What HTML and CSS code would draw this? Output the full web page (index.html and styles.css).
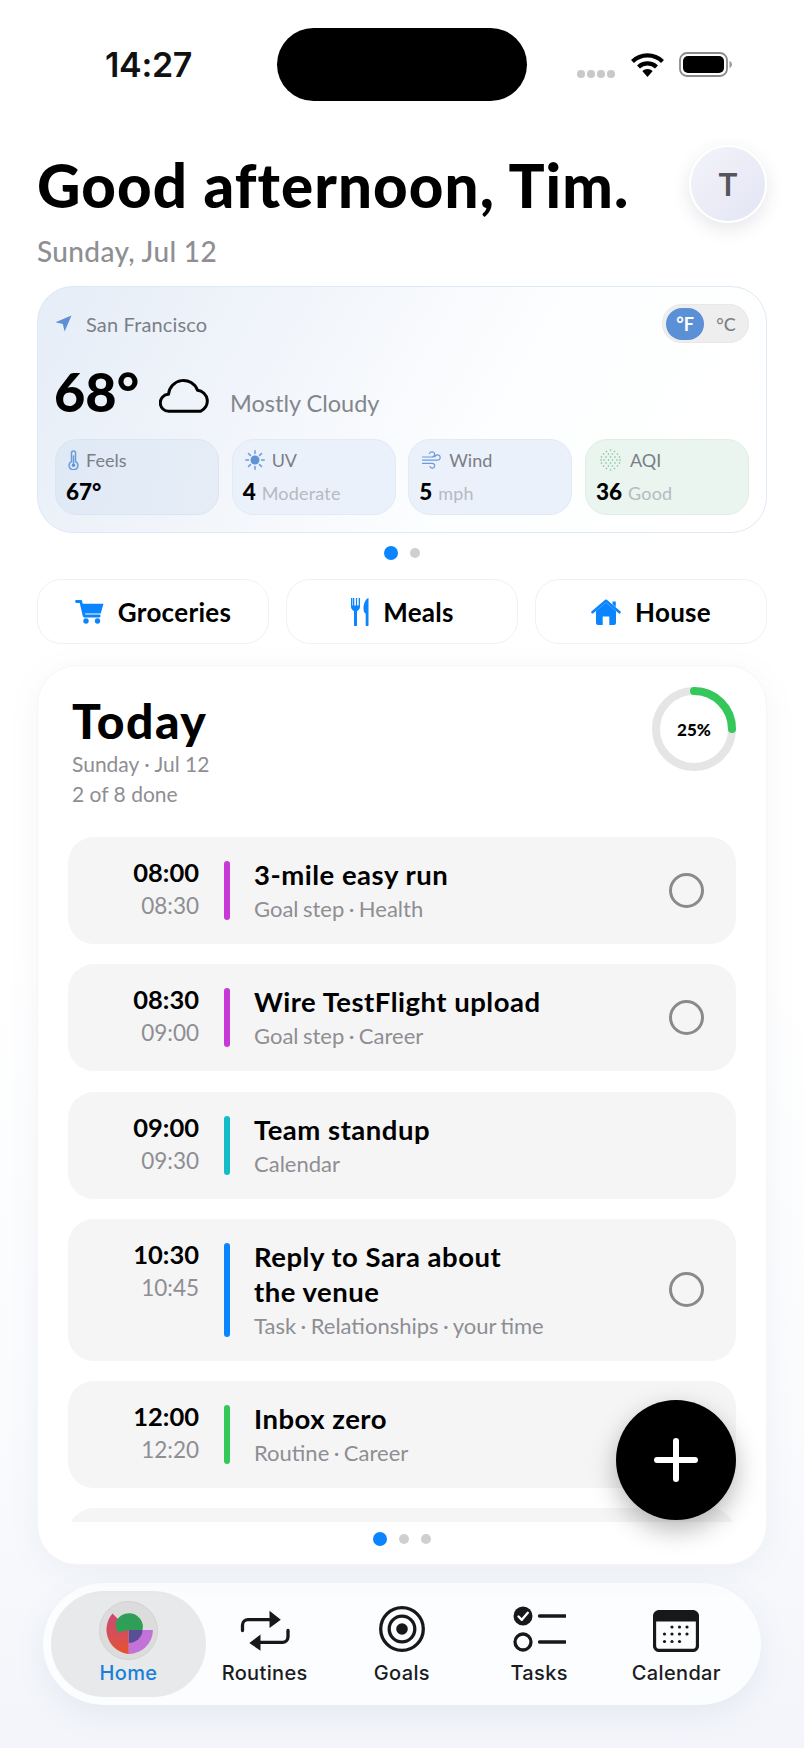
FILE: index.html
```html
<!DOCTYPE html>
<html lang="en">
<head>
<meta charset="utf-8">
<title>Home</title>
<link rel="stylesheet" href="styles.css">
</head>
<body>
<div class="phone">
  <header class="status">
    <div class="status-left"><span class="clock">14:27</span></div>
    <div class="island"></div>
    <div class="status-right">
      <span class="signal"><i></i><i></i><i></i><i></i></span>
      <svg class="wifi" width="33" height="24" viewBox="0 0 33 24"><path d="M1.500 8.500a21.500 21.500 0 0 1 30 0" class="wifi-arc"/><path d="M7.500 14a13 13 0 0 1 18 0" class="wifi-arc"/><path d="M16.500 24l-5.200-6a7.600 7.600 0 0 1 10.400 0z" class="wifi-fill"/></svg>
      <svg class="battery" width="54" height="25" viewBox="0 0 54 25"><rect x="1" y="1" width="47" height="23" rx="7" class="batt-shell"/><rect x="4" y="4" width="41" height="17" rx="5" class="batt-fill"/><path d="M50.500 9v7c1.600-.6 2.500-2 2.500-3.500s-.9-2.900-2.500-3.500z" class="batt-cap"/></svg>
    </div>
  </header>

  <section class="greeting">
    <div>
      <h1 class="hello">Good afternoon, Tim.</h1>
      <p class="date">Sunday, Jul 12</p>
    </div>
    <div class="avatar">T</div>
  </section>

  <section class="weather">
    <div class="weather-top">
      <div class="place">
        <svg width="17" height="17" viewBox="0 0 17 17"><path d="M16.500.5L.5 7.200l7.300 1.800 1.800 7.500z" class="loc"/></svg>
        <span>San Francisco</span>
      </div>
      <div class="unit"><span class="unit-on">°F</span><span class="unit-off">°C</span></div>
    </div>
    <div class="now">
      <span class="temp">68°</span>
      <svg class="cloud" width="53" height="35" viewBox="0 0 53 35"><path d="M10 33.300a8.500 8.500 0 0 1-.5-17A15 15 0 0 1 38.500 12.200 11 11 0 0 1 41.500 33.300z" class="cloud-line"/></svg>
      <span class="cond">Mostly Cloudy</span>
    </div>
    <div class="tiles">
      <div class="tile tile-deep">
        <div class="tile-label tl-feels">
          <svg width="11" height="20" viewBox="0 0 11 20"><path d="M3.500 11.500V3a2 2 0 0 1 4 0v8.500a4.400 4.400 0 1 1-4 0z" class="ic-line"/><circle cx="5.500" cy="15.300" r="1.800" class="ic-fill"/><path d="M5.500 6v8" class="ic-line"/></svg>
          <span>Feels</span>
        </div>
        <div class="tile-val"><b>67°</b></div>
      </div>
      <div class="tile">
        <div class="tile-label tl-uv">
          <svg width="20" height="20" viewBox="0 0 20 20"><circle cx="10" cy="10" r="4.500" class="ic-fill"/><path d="M10 .8v2.700M10 16.500v2.700M.8 10h2.700M16.500 10h2.700M3.500 3.500l1.900 1.900M14.600 14.600l1.900 1.900M3.500 16.500l1.900-1.900M14.600 5.400l1.900-1.900" class="ic-line"/></svg>
          <span>UV</span>
        </div>
        <div class="tile-val"><b>4</b><span>Moderate</span></div>
      </div>
      <div class="tile">
        <div class="tile-label tl-wind">
          <svg width="19" height="18" viewBox="0 0 19 18"><path d="M.5 6h9.500a2.600 2.600 0 1 0-2.500-3.300M.5 9.200h15a2.700 2.700 0 1 0-2.600-3.500M.5 12.400h9.800a2.400 2.400 0 1 1-2.300 3.100" class="ic-thin"/></svg>
          <span>Wind</span>
        </div>
        <div class="tile-val"><b>5</b><span>mph</span></div>
      </div>
      <div class="tile tile-green">
        <div class="tile-label tl-aqi">
          <svg width="21" height="22" viewBox="0 0 21 22" class="aqi-dots"><circle cx="10.500" cy="1" r=".8"/><circle cx="6.500" cy="2.500" r=".8"/><circle cx="14.500" cy="2.500" r=".8"/><circle cx="3.500" cy="5" r=".8"/><circle cx="8.500" cy="5" r=".8"/><circle cx="12.500" cy="5" r=".8"/><circle cx="17.500" cy="5" r=".8"/><circle cx="1.500" cy="8" r=".8"/><circle cx="6" cy="8" r=".8"/><circle cx="10.500" cy="8" r=".8"/><circle cx="15" cy="8" r=".8"/><circle cx="19.500" cy="8" r=".8"/><circle cx="1" cy="11" r=".8"/><circle cx="4" cy="11" r=".8"/><circle cx="8.500" cy="11" r=".8"/><circle cx="12.500" cy="11" r=".8"/><circle cx="17" cy="11" r=".8"/><circle cx="20" cy="11" r=".8"/><circle cx="1.500" cy="14" r=".8"/><circle cx="6" cy="14" r=".8"/><circle cx="10.500" cy="14" r=".8"/><circle cx="15" cy="14" r=".8"/><circle cx="19.500" cy="14" r=".8"/><circle cx="3.500" cy="17" r=".8"/><circle cx="8.500" cy="17" r=".8"/><circle cx="12.500" cy="17" r=".8"/><circle cx="17.500" cy="17" r=".8"/><circle cx="6.500" cy="19.500" r=".8"/><circle cx="14.500" cy="19.500" r=".8"/><circle cx="10.500" cy="21" r=".8"/></svg>
          <span>AQI</span>
        </div>
        <div class="tile-val"><b>36</b><span>Good</span></div>
      </div>
    </div>
  </section>

  <div class="pager pager-weather"><i class="on"></i><i></i></div>

  <nav class="chips">
    <a class="chip">
      <svg width="29" height="24" viewBox="0 0 29 24"><path d="M1.500 1.500h4.300l3.400 14.500h15" class="cart-line"/><path d="M7 3.800h21.500l-2.800 9.700H8.800z" class="blue"/><circle cx="11" cy="21" r="2.700" class="blue"/><circle cx="22.500" cy="21" r="2.700" class="blue"/></svg>
      <span>Groceries</span>
    </a>
    <a class="chip">
      <svg width="19" height="28" viewBox="0 0 19 28"><path d="M1 0v8.500c0 2.300 1.200 3.700 3 4.400V27a1.500 1.500 0 0 0 3 0V12.900c1.800-.7 3-2.100 3-4.400V0H8.700v7.500H7.100V0H5.900v7.500H4.300V0H2.700v7.500H2.100V0z" class="blue"/><path d="M18.500 0c-3 1-5 5.500-5 10.500 0 2.500.8 4.500 2.200 5.300V27a1.400 1.400 0 0 0 2.800 0z" class="blue"/></svg>
      <span>Meals</span>
    </a>
    <a class="chip">
      <svg width="30" height="26" viewBox="0 0 30 26"><path d="M5 12L15 3.500 25 12v12a2 2 0 0 1-2 2h-4.700v-8.500h-6.600V26H7a2 2 0 0 1-2-2z" class="blue"/><path d="M1.500 13.200L15 1.800l13.500 11.400" class="house-roof"/><path d="M21.500 2.500h3.300v5.600l-3.300-2.800z" class="blue"/></svg>
      <span>House</span>
    </a>
  </nav>

  <section class="today">
    <div class="today-head">
      <div>
        <h2 class="today-title">Today</h2>
        <p class="today-sub">Sunday · Jul 12</p>
        <p class="today-sub">2 of 8 done</p>
      </div>
      <div class="ring">
        <svg width="84" height="84" viewBox="0 0 84 84"><circle cx="42" cy="42" r="38" class="ring-bg"/><path d="M42 4a38 38 0 0 1 38 38" class="ring-on"/></svg>
        <span class="ring-num">25%</span>
      </div>
    </div>

    <div class="rows">
      <article class="row">
        <div class="times"><b>08:00</b><span>08:30</span></div>
        <i class="bar bar-purple"></i>
        <div class="main"><h3>3-mile easy run</h3><p>Goal step · Health</p></div>
        <i class="check"></i>
      </article>
      <article class="row">
        <div class="times"><b>08:30</b><span>09:00</span></div>
        <i class="bar bar-purple"></i>
        <div class="main"><h3>Wire TestFlight upload</h3><p>Goal step · Career</p></div>
        <i class="check"></i>
      </article>
      <article class="row">
        <div class="times"><b>09:00</b><span>09:30</span></div>
        <i class="bar bar-teal"></i>
        <div class="main"><h3>Team standup</h3><p>Calendar</p></div>
      </article>
      <article class="row">
        <div class="times"><b>10:30</b><span>10:45</span></div>
        <i class="bar bar-blue"></i>
        <div class="main"><h3>Reply to Sara about<br>the venue</h3><p>Task · Relationships · your time</p></div>
        <i class="check"></i>
      </article>
      <article class="row">
        <div class="times"><b>12:00</b><span>12:20</span></div>
        <i class="bar bar-green"></i>
        <div class="main"><h3>Inbox zero</h3><p>Routine · Career</p></div>
      </article>
      <article class="row"></article>
    </div>

    <div class="pager pager-today"><i class="on"></i><i></i><i></i></div>

    <button class="fab" aria-label="Add">
      <svg width="44" height="44" viewBox="0 0 44 44"><path d="M22 3v38M3 22h38" class="plus"/></svg>
    </button>
  </section>

  <nav class="tabs">
    <a class="tab tab-home">
      <svg width="59" height="59" viewBox="0 0 59 59">
        <defs><linearGradient id="pie" x1="0" y1="0" x2="0" y2="1"><stop offset="0" stop-color="#d1486e"/><stop offset=".55" stop-color="#d64f55"/><stop offset="1" stop-color="#e8522a"/></linearGradient></defs>
        <circle cx="29.500" cy="29.500" r="29" class="pie-bg"/>
        <path d="M29.800 29L13.500 12.500A24.500 24.500 0 0 0 29.800 53z" fill="url(#pie)"/>
        <path d="M29.800 29H54A24.500 24.500 0 0 1 29.800 53z" class="pie-purple"/>
        <path d="M16.500 23a13.500 13.500 0 1 1 27 6H29.800L19 31.500a13.500 13.500 0 0 1-2.500-8.500z" class="pie-green"/>
        <path d="M29.800 29H43.500A13.500 13.500 0 0 1 29.800 42z" class="pie-slate"/>
      </svg>
      <span>Home</span>
    </a>
    <a class="tab">
      <svg width="50" height="42" viewBox="0 0 50 42"><path d="M2.500 20.500v-5.500a5.500 5.500 0 0 1 5.500-5.300h23" class="tab-line"/><path d="M29.500.8L40.800 9.700 29.500 18z" class="tab-fill"/><path d="M48 20.500V27a5.500 5.500 0 0 1-5.500 5.300H19" class="tab-line"/><path d="M20.500 24.500L9.300 33l11.200 7.700z" class="tab-fill"/></svg>
      <span>Routines</span>
    </a>
    <a class="tab">
      <svg width="48" height="46" viewBox="0 0 48 46"><circle cx="24" cy="23" r="21.300" class="tab-line"/><circle cx="24" cy="23" r="12.800" class="tab-line"/><circle cx="24" cy="23" r="5.800" class="tab-fill"/></svg>
      <span>Goals</span>
    </a>
    <a class="tab">
      <svg width="53" height="46" viewBox="0 0 53 46"><circle cx="10" cy="10" r="9.500" class="tab-fill"/><path d="M5.500 10.500l3.300 3.300 6-7" class="tab-tick"/><circle cx="10" cy="36" r="8" class="tab-line"/><path d="M26.500 10h26M26.500 36h26" class="tab-line"/></svg>
      <span>Tasks</span>
    </a>
    <a class="tab">
      <svg width="46" height="42" viewBox="0 0 46 42" class="cal"><rect x="1.500" y="1.500" width="43" height="39" rx="5" class="tab-line"/><path d="M1.500 6.500a5 5 0 0 1 5-5h33a5 5 0 0 1 5 5v5h-43z" class="tab-fill"/><g class="tab-fill"><circle cx="19" cy="17" r="1.600"/><circle cx="26.500" cy="17" r="1.600"/><circle cx="34" cy="17" r="1.600"/><circle cx="11.500" cy="24" r="1.600"/><circle cx="19" cy="24" r="1.600"/><circle cx="26.500" cy="24" r="1.600"/><circle cx="34" cy="24" r="1.600"/><circle cx="11.500" cy="31.500" r="1.600"/><circle cx="19" cy="31.500" r="1.600"/><circle cx="26.500" cy="31.500" r="1.600"/></g></svg>
      <span>Calendar</span>
    </a>
  </nav>
</div>
</body>
</html>
```

FILE: styles.css
```css
* { box-sizing: border-box; }
html, body { margin: 0; padding: 0; }
body {
  width: 804px;
  height: 1748px;
  overflow: hidden;
  background: linear-gradient(180deg, #ffffff 0%, #ffffff 55%, #f9fbfd 80%, #f3f5fa 100%);
  font-family: "Lato", "Noto Sans", sans-serif;
  color: #000;
}
h1, h2, h3, p { margin: 0; }
.phone { width: 804px; height: 1748px; display: flex; flex-direction: column; }

/* status bar */
.status { height: 73px; margin-top: 28px; display: flex; align-items: center; flex: none; }
.status-left { width: 277px; padding-left: 105px; }
.clock { font: 600 34px/40px "Inter", sans-serif; color: #111; letter-spacing: -.3px; }
.island { width: 250px; height: 73px; border-radius: 37px; background: #000; flex: none; }
.status-right { flex: 1; display: flex; align-items: center; padding-left: 50px; }
.signal { display: flex; gap: 2.500px; margin-top: 19px; margin-right: 16px; }
.signal i { width: 7.500px; height: 7.500px; border-radius: 50%; background: #c9c9cb; }
.wifi { margin-right: 15px; }
.wifi-arc { fill: none; stroke: #000; stroke-width: 4.200; }
.wifi-fill { fill: #000; }
.batt-shell { fill: none; stroke: #8a8a8c; stroke-width: 1.800; }
.batt-fill { fill: #000; }
.batt-cap { fill: #9a9a9c; }

/* greeting */
.greeting { height: 185px; padding: 44px 37px 0; display: flex; justify-content: space-between; flex: none; }
.hello { font-weight: 900; font-size: 60px; line-height: 70px; margin-top: 5px; letter-spacing: 1.100px; white-space: nowrap; }
.date { font-size: 28px; line-height: 34px; color: #8e8e93; margin-top: 14px; font-weight: 500; letter-spacing: .35px; }
.avatar {
  width: 78px; height: 78px; border-radius: 50%;
  background: linear-gradient(135deg, #f3f3f9, #e3e5f4);
  border: 2px solid #fff;
  box-shadow: 0 6px 18px rgba(60, 60, 90, .12);
  display: flex; align-items: center; justify-content: center;
  font: 600 31px "Inter", sans-serif; color: #55555c;
  flex: none;
}

/* weather */
.weather {
  width: 730px; height: 247px; margin: 0 0 0 37px; flex: none;
  border-radius: 36px; border: 1px solid #dfe9f4;
  background: linear-gradient(120deg, #e5edf7 0%, #f3f6fb 35%, #fdfeff 62%, #ffffff 100%);
  padding: 17px;
  display: flex; flex-direction: column;
}
.weather-top { display: flex; justify-content: space-between; align-items: center; height: 39px; flex: none; }
.place { display: flex; align-items: center; gap: 14px; font-size: 20px; color: #7b7f87; letter-spacing: .15px; }
.loc { fill: #5c8fd6; }
.unit { width: 87px; height: 39px; border-radius: 20px; background: #eeeeef; border: 1px solid #e8e8ea; display: flex; align-items: center; padding-left: 3px; font-size: 18px; font-weight: 700; }
.unit-on { width: 38px; height: 32px; border-radius: 17px; background: #5b8fd6; color: #fff; display: flex; align-items: center; justify-content: center; }
.unit-off { flex: 1; text-align: center; color: #7c7f85; font-weight: 500; }
.now { height: 96px; display: flex; align-items: flex-end; padding-bottom: 17px; flex: none; }
.temp { font-weight: 900; font-size: 54px; line-height: 60px; width: 105px; margin-left: -1px; flex: none; }
.cloud { margin-bottom: 9px; flex: none; }
.cond { font-size: 23.500px; line-height: 30px; color: #83868c; margin-left: 18px; margin-bottom: 4px; }
.tiles { display: grid; grid-template-columns: repeat(4, 1fr); gap: 12.500px; }
.tile { height: 76px; border-radius: 22px; background: #ebf1fa; border: 1px solid #e2eaf5; padding: 9px 0 0 11px; }
.tile-deep { background: linear-gradient(100deg, #dfe9f5, #e6edf7); border-color: #dbe5f1; }
.tile-green { background: #e9f5ee; border-color: #e0efe6; }
.tile-label { display: flex; align-items: center; font-size: 18px; line-height: 22px; color: #7a7e86; height: 22px; }
.tl-feels { gap: 7px; padding-left: 1px; }
.tl-uv { gap: 7px; padding-left: 1px; }
.tl-wind { gap: 8px; padding-left: 2px; }
.tl-aqi { gap: 9px; padding-left: 3px; }
.ic-line { fill: none; stroke: #6b9bd9; stroke-width: 1.500; stroke-linecap: round; }
.ic-thin { fill: none; stroke: #6b9bd9; stroke-width: 1.200; stroke-linecap: round; }
.ic-fill { fill: #5f93d8; }
.aqi-dots circle { fill: #7dbb9a; }
.tile-val { display: flex; align-items: baseline; gap: 6px; margin: 8px 0 0 -1px; }
.tile-val b { font-size: 22.500px; line-height: 26px; font-weight: 900; }
.tile-val span { font-size: 18px; color: #b6bac1; letter-spacing: .2px; }

/* pagers */
.pager { display: flex; align-items: center; justify-content: center; }
.pager i { width: 10px; height: 10px; border-radius: 50%; background: #cfcfd1; }
.pager i.on { width: 14px; height: 14px; background: #0a84ff; }
.pager-weather { height: 46px; gap: 12px; flex: none; padding-bottom: 6px; }
.pager-today { height: 34px; gap: 12px; flex: none; }

/* chips */
.chips { display: flex; gap: 17px; padding-left: 37px; height: 65px; flex: none; }
.chip {
  width: 232px; height: 65px; border-radius: 24px; background: #fff;
  border: 1px solid #f1f1f2;
  display: flex; align-items: center; justify-content: center; gap: 14px;
  font-size: 26px; font-weight: 700; color: #000; letter-spacing: .3px;
}
.blue { fill: #0a84ff; }
.cart-line { fill: none; stroke: #0a84ff; stroke-width: 2.800; stroke-linecap: round; stroke-linejoin: round; }
.house-roof { fill: none; stroke: #0a84ff; stroke-width: 2.600; stroke-linecap: round; stroke-linejoin: round; }
.cloud-line { fill: none; stroke: #000; stroke-width: 3; stroke-linejoin: round; }

/* today */
.today {
  position: relative;
  width: 730px; height: 900px; margin: 21px 0 0 37px; flex: none;
  background: #fff; border-radius: 40px;
  box-shadow: 0 6px 30px rgba(120, 130, 160, .08);
  border: 1px solid #f6f6f8;
  padding: 0 30px;
  display: flex; flex-direction: column;
}
.today-head { height: 171px; display: flex; justify-content: space-between; padding: 0 0 0 4px; flex: none; }
.today-title { font-weight: 900; font-size: 48px; line-height: 56px; margin-top: 27px; letter-spacing: 1.500px; }
.today-sub { font-size: 21px; line-height: 30px; color: #8e8e93; }
.ring { position: relative; width: 84px; height: 84px; margin: 21px 0 0 0; }
.ring-bg { fill: none; stroke: #e5e5e6; stroke-width: 8; }
.ring-on { fill: none; stroke: #34c759; stroke-width: 8; stroke-linecap: round; }
.ring-num { position: absolute; inset: 0; display: flex; align-items: center; justify-content: center; font-size: 17px; font-weight: 900; }

.rows { height: 685px; overflow: hidden; display: flex; flex-direction: column; gap: 20.300px; flex: none; }
.row { flex: none; min-height: 107px; background: #f5f5f6; border-radius: 26px; display: flex; align-items: flex-start; padding: 24px 32px 24px 0; }
.times { width: 131px; display: flex; flex-direction: column; align-items: flex-end; }
.times b { font-size: 25.500px; line-height: 24px; font-weight: 700; margin-top: -1px; }
.times span { font-size: 22.500px; line-height: 24px; color: #8e8e93; margin-top: 10px; }
.bar { width: 6px; align-self: stretch; border-radius: 3px; margin-left: 25px; flex: none; }
.bar-purple { background: #c738d6; }
.bar-teal { background: #14bcc8; }
.bar-blue { background: #0a84ff; }
.bar-green { background: #34c759; }
.main { flex: 1; margin-left: 24px; }
.main h3 { font-size: 27.500px; line-height: 35px; font-weight: 700; margin-top: -4px; letter-spacing: .5px; }
.main p { font-size: 22px; line-height: 22px; color: #8e8e93; margin-top: 6px; word-spacing: -1.200px; }
.check { width: 35px; height: 35px; border-radius: 50%; border: 3px solid #8a8a8c; align-self: center; flex: none; }

.fab {
  position: absolute; left: 578px; top: 734px;
  width: 120px; height: 120px; border-radius: 50%; border: 0; padding: 0;
  background: #000;
  box-shadow: 0 10px 26px rgba(0, 0, 0, .28);
  display: flex; align-items: center; justify-content: center;
}
.plus { fill: none; stroke: #fff; stroke-width: 6; stroke-linecap: round; }

/* tabs */
.tabs {
  width: 718px; height: 122px; margin: 18px 0 0 43px; flex: none;
  border-radius: 61px; background: #fbfdfe;
  box-shadow: 0 10px 30px rgba(110, 125, 165, .10);
  display: flex; padding: 8px 16px 8px 8px;
}
.tab {
  flex: 1; display: flex; flex-direction: column; align-items: center; justify-content: flex-end;
  font: 500 20px/24px "Inter", sans-serif; color: #1c1c1e; letter-spacing: .35px;
  padding-bottom: 12px; gap: 9px;
}
.tab-home {
  flex: 0 0 155px; margin-right: -10px; border-radius: 53px; background: #e8e9ea;
  color: #1b7fd9; gap: 1px;
}
.pie-bg { fill: #dcdcdc; stroke: #d2d2d3; stroke-width: 1; }
.pie-purple { fill: #c272d8; }
.pie-green { fill: #2f9e57; }
.pie-slate { fill: #5a4f96; }
.tab-line { fill: none; stroke: #17181a; stroke-width: 3.300; stroke-linecap: round; }
.tab-fill { fill: #17181a; }
.tab-tick { fill: none; stroke: #fff; stroke-width: 2.400; stroke-linecap: round; stroke-linejoin: round; }
```
